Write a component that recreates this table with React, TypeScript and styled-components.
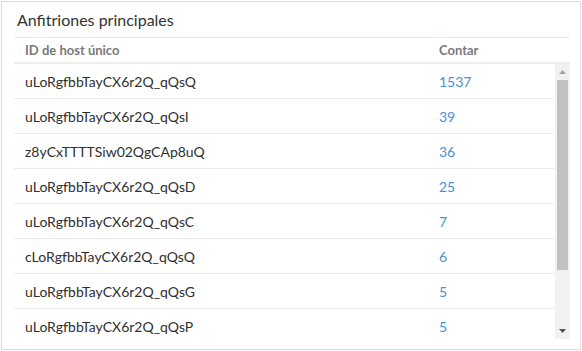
import React from "react";
import styled, { createGlobalStyle } from "styled-components";

const Global = createGlobalStyle`
  html, body { margin: 0; padding: 0; background: #ffffff; }
  body { font-family: Lato, "Liberation Sans", sans-serif; }
  * { box-sizing: border-box; }
`;

const Card = styled.div`
  margin: 1px;
  width: 580px;
  height: 349px;
  border: 1px solid #dcdcdc;
  padding: 0 10px 10px 12px;
  display: flex;
  flex-direction: column;
  background: #fff;
`;

const Title = styled.div`
  height: 36px;
  flex: none;
  display: flex;
  align-items: center;
  padding-left: 3px;
  border-bottom: 1px solid #e6e6e6;
  font-size: 16px;
  color: #333;
`;

const HeaderRow = styled.div`
  display: grid;
  flex: none;
  grid-template-columns: 414px 1fr;
  height: 26px;
  align-items: center;
  border-bottom: 2px solid #ececec;
`;

const HeaderCell = styled.div`
  padding-left: 11px;
  font-size: 13px;
  font-weight: 700;
  color: #7a7a7a;
`;

const ScrollFrame = styled.div`
  flex: 1;
  min-height: 0;
  display: flex;
`;

const Body = styled.div`
  flex: 1;
  min-width: 0;
  overflow: hidden;
`;

const Scrollbar = styled.div`
  width: 15px;
  flex: none;
  display: flex;
  flex-direction: column;
  background: #f1f1f1;
`;

const ArrowButton = styled.div`
  height: 15px;
  flex: none;
  display: flex;
  align-items: center;
  justify-content: center;
`;

const Track = styled.div`
  flex: 1;
  padding: 1px 2px 0;
`;

const Thumb = styled.div`
  background: #c1c1c1;
`;

const Row = styled.div`
  display: grid;
  grid-template-columns: 414px 1fr;
  height: 35px;
  align-items: center;
  border-bottom: 1px solid #ececec;
`;

const Cell = styled.div<{ $link?: boolean }>`
  padding-left: 11px;
  font-size: 14px;
  color: ${(p) => (p.$link ? "#4a90d9" : "#2f2f2f")};
`;

const rows: [string, number][] = [
  ["uLoRgfbbTayCX6r2Q_qQsQ", 1537],
  ["uLoRgfbbTayCX6r2Q_qQsI", 39],
  ["z8yCxTTTTSiw02QgCAp8uQ", 36],
  ["uLoRgfbbTayCX6r2Q_qQsD", 25],
  ["uLoRgfbbTayCX6r2Q_qQsC", 7],
  ["cLoRgfbbTayCX6r2Q_qQsQ", 6],
  ["uLoRgfbbTayCX6r2Q_qQsG", 5],
  ["uLoRgfbbTayCX6r2Q_qQsP", 5],
];

const visibleHeight = 275;
const contentHeight = 354;
const trackHeight = 245;
const thumbHeight = Math.round((visibleHeight / contentHeight) * trackHeight);

export default function App() {
  return (
    <>
      <Global />
      <Card>
        <Title>Anfitriones principales</Title>
        <HeaderRow>
          <HeaderCell>ID de host único</HeaderCell>
          <HeaderCell>Contar</HeaderCell>
        </HeaderRow>
        <ScrollFrame>
          <Body>
            {rows.map(([id, n]) => (
              <Row key={id}>
                <Cell>{id}</Cell>
                <Cell $link>{n}</Cell>
              </Row>
            ))}
          </Body>
          <Scrollbar>
            <ArrowButton>
              <svg width="7" height="4" viewBox="0 0 7 4">
                <path d="M0 4 L3.5 0 L7 4 Z" fill="#a3a3a3" />
              </svg>
            </ArrowButton>
            <Track>
              <Thumb style={{ height: thumbHeight }} />
            </Track>
            <ArrowButton>
              <svg width="7" height="4" viewBox="0 0 7 4" style={{ marginTop: -2 }}>
                <path d="M0 0 L7 0 L3.5 4 Z" fill="#505060" />
              </svg>
            </ArrowButton>
          </Scrollbar>
        </ScrollFrame>
      </Card>
    </>
  );
}
